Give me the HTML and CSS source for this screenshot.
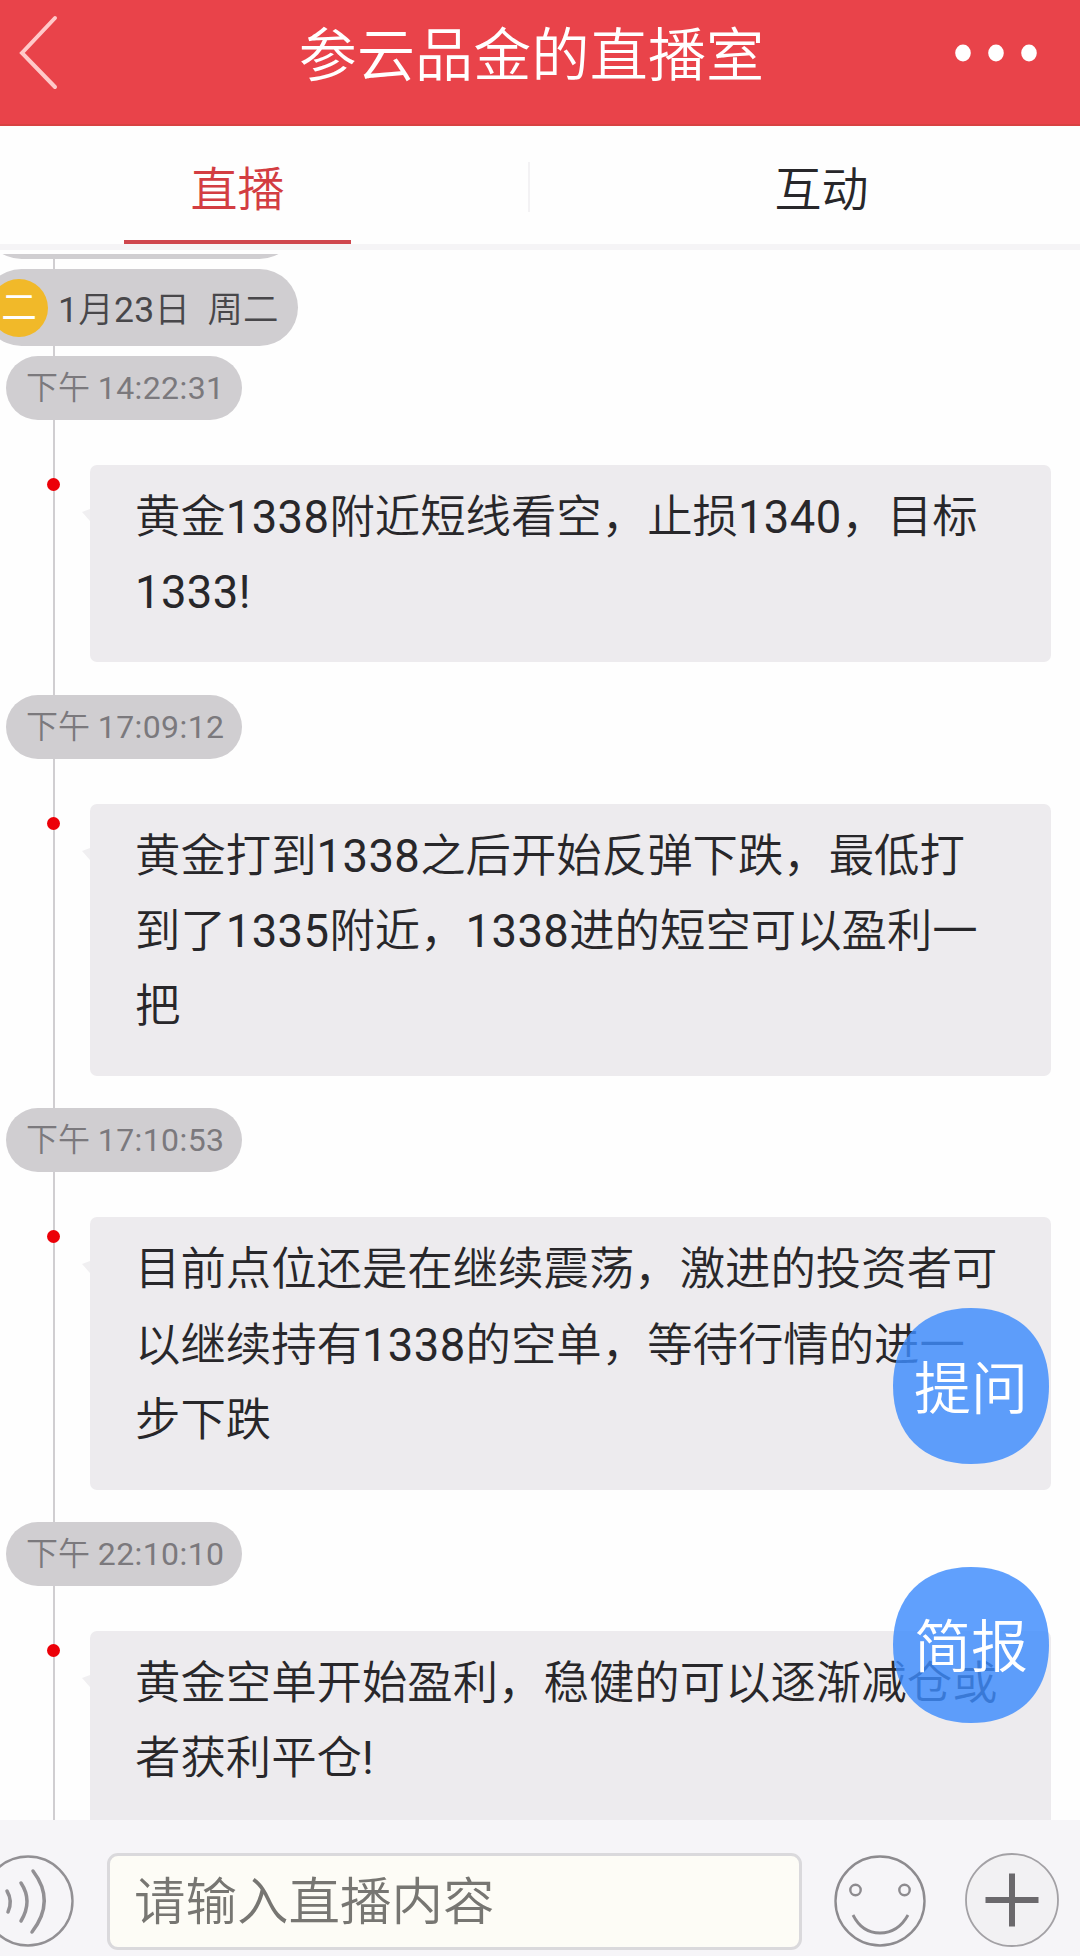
FILE: index.html
```html
<!DOCTYPE html>
<html lang="zh-CN">
<head>
    <meta charset="UTF-8">
    <meta name="viewport" content="width=device-width, initial-scale=1.0">
    <title>参云品金的直播室</title>
    <link rel="stylesheet" href="styles.css">
</head>
<body>
    <header class="header">
        <svg class="back" width="40" height="80" viewBox="0 0 40 80">
            <path d="M36 5 L3 40 L36 74" fill="none" stroke="#ffc9c9" stroke-width="4" stroke-linecap="round"/>
        </svg>
        <h1 class="title">参云品金的直播室</h1>
        <svg class="more" width="84" height="20" viewBox="0 0 84 20">
            <ellipse cx="9" cy="10" rx="7.8" ry="8.5" fill="#fff"/>
            <ellipse cx="42" cy="10" rx="7.8" ry="8.5" fill="#fff"/>
            <ellipse cx="75" cy="10" rx="7.8" ry="8.5" fill="#fff"/>
        </svg>
    </header>

    <nav class="tabs">
        <div class="tab active"><span>直播</span></div>
        <div class="tab-divider"></div>
        <div class="tab"><span>互动</span></div>
    </nav>

    <main class="feed">
        <div class="timeline">
            <div class="date previous"></div>
            <div class="date"><span class="day">二</span><span class="date-text"><span class="num">1</span>月<span class="num">23</span>日&nbsp; 周二</span></div>

            <div class="item">
                <div class="time">下午 <span class="num">14:22:31</span></div>
                <div class="message">黄金<span class="num">1338</span>附近短线看空，止损<span class="num">1340</span>，目标<span class="num">1333!</span></div>
            </div>
            <div class="item">
                <div class="time">下午 <span class="num">17:09:12</span></div>
                <div class="message">黄金打到<span class="num">1338</span>之后开始反弹下跌，最低打到了<span class="num">1335</span>附近，<span class="num">1338</span>进的短空可以盈利一把</div>
            </div>
            <div class="item">
                <div class="time">下午 <span class="num">17:10:53</span></div>
                <div class="message">目前点位还是在继续震荡，激进的投资者可以继续持有<span class="num">1338</span>的空单，等待行情的进一步下跌</div>
            </div>
            <div class="item">
                <div class="time">下午 <span class="num">22:10:10</span></div>
                <div class="message">黄金空单开始盈利，稳健的可以逐渐减仓或者获利平仓<span class="num">!</span></div>
            </div>
        </div>
    </main>

    <button class="float-btn ask">
        <svg class="float-bg" viewBox="0 0 156 156"><path d="M78 0C126 0 156 30 156 78S126 156 78 156S0 126 0 78S30 0 78 0Z"/></svg>
        <span>提问</span>
    </button>
    <button class="float-btn brief">
        <svg class="float-bg" viewBox="0 0 156 156"><path d="M78 0C126 0 156 30 156 78S126 156 78 156S0 126 0 78S30 0 78 0Z"/></svg>
        <span>简报</span>
    </button>

    <footer class="bottom-bar">
        <svg class="voice" width="92" height="94" viewBox="0 0 92 94" fill="none" stroke="#929094" stroke-width="3.5" stroke-linecap="round">
            <circle cx="46" cy="47" r="44.5" stroke-width="2.4"/>
            <path d="M25 37 Q31 47 26 58"/>
            <path d="M39 29 Q51 47 39 67"/>
            <path d="M51 17 Q74 47 50 78"/>
        </svg>
        <input class="input" type="text" placeholder="请输入直播内容">
        <svg class="smile" width="92" height="94" viewBox="0 0 92 94" fill="none" stroke="#8d8b8f" stroke-width="2.4">
            <circle cx="46" cy="47" r="44.5"/>
            <circle cx="21.5" cy="36" r="5.2"/>
            <circle cx="70.5" cy="36" r="5.2"/>
            <path d="M19 61 Q28 79 46 79 T74 61" stroke-width="2.8"/>
        </svg>
        <svg class="plus" width="94" height="96" viewBox="0 0 94 96" fill="none">
            <circle cx="47" cy="47" r="46" fill="#f2f1f3" stroke="#a3a1a5" stroke-width="1.8"/>
            <path d="M20.5 47H73.5M47 20.5V73.5" stroke="#6b696c" stroke-width="6"/>
        </svg>
    </footer>
</body>
</html>
```

FILE: styles.css
```css
* {
    box-sizing: border-box;
}
body {
    margin: 0;
    width: 1080px;
    height: 1956px;
    display: flex;
    flex-direction: column;
    position: relative;
    overflow: hidden;
    background: #fefefe;
    font-family: Roboto, "Noto Sans CJK SC", sans-serif;
    font-weight: 350;
    color: #28272a;
}
.header {
    height: 126px;
    flex: none;
    display: flex;
    align-items: center;
    justify-content: space-between;
    padding: 0 42px 18px 19px;
    background: #e9434a;
    border-bottom: 2px solid #d84242;
}
.title {
    margin: 5px 0 0 50px;
    font-size: 58px;
    font-weight: 350;
    letter-spacing: 0.2px;
    line-height: 80px;
    color: #fff;
}
.tabs {
    height: 124px;
    flex: none;
    display: flex;
    justify-content: space-between;
    border-bottom: 6px solid #f5f4f6;
}
.tab {
    width: 227px;
    height: 118px;
    margin: 0 144px 0 124px;
    font-size: 47px;
    line-height: 128px;
    text-align: center;
}
.tab:last-child {
    margin: 0 145px;
}
.tab.active {
    color: #d33d42;
    border-bottom: 4px solid #cf474e;
}
.tab-divider {
    width: 2px;
    height: 50px;
    margin-top: 36px;
    background: #f3f2f4;
}
.feed {
    flex: 1;
    min-height: 0;
    margin-top: 4px;
    overflow: hidden;
}
.timeline {
    position: relative;
}
/* vertical line behind the pills */
.timeline::before {
    content: "";
    position: absolute;
    left: 53px;
    top: 0;
    bottom: 0;
    width: 2px;
    background: #d0ced1;
}
.num {
    font-weight: 400;
    letter-spacing: 0.4px;
}
.date {
    position: relative;
    display: flex;
    align-items: center;
    width: 315px;
    height: 77px;
    margin: 0 0 10px -17px;
    padding-left: 7px;
    border-radius: 39px;
    background: #d0ced1;
    font-size: 35.5px;
    color: #48474a;
    white-space: pre;
}
.date.previous {
    margin-top: -72px;
}
.date-text {
    padding-bottom: 3px;
}
.day {
    width: 58px;
    height: 58px;
    margin-right: 10px;
    border-radius: 50%;
    background: #f1b929;
    color: #fff;
    font-weight: 400;
    line-height: 59px;
    text-align: center;
}
.item {
    display: flex;
    flex-direction: column;
    padding-bottom: 32.6px;
}
.time {
    position: relative;
    width: 236px;
    height: 64px;
    margin: 0 0 45px 6px;
    padding-left: 20px;
    border-radius: 32px;
    background: #d0ced1;
    color: #7b797d;
    font-size: 32px;
    line-height: 65px;
    white-space: nowrap;
}
.message {
    position: relative;
    width: 961px;
    margin-left: 90px;
    padding: 15px 42px 31.6px 45px;
    border-radius: 7px;
    background: #edebee;
    font-size: 45.4px;
    line-height: 75.2px;
}
.message::before {
    content: "";
    position: absolute;
    left: -43px;
    top: 13px;
    width: 13px;
    height: 13px;
    border-radius: 50%;
    background: #ec0008;
}
.message::after {
    content: "";
    position: absolute;
    left: -8px;
    top: 44px;
    border-top: 3px solid transparent;
    border-right: 8px solid #f0eff1;
    border-bottom: 9px solid transparent;
}
.float-btn {
    position: absolute;
    left: 893px;
    width: 156px;
    height: 156px;
    padding: 0 0 4px;
    border: none;
    background: none;
    color: #fff;
    font-family: inherit;
    font-size: 57px;
    font-weight: 350;
    cursor: pointer;
}
.float-btn span {
    position: relative;
}
.float-bg {
    position: absolute;
    left: 0;
    top: 0;
    width: 156px;
    height: 156px;
    fill: rgba(61, 139, 252, 0.82);
}
.ask {
    top: 1308px;
}
.brief {
    top: 1567px;
    padding-bottom: 6px;
}
.bottom-bar {
    height: 136px;
    flex: none;
    display: flex;
    align-items: center;
    padding: 26px 21px 0 0;
    background: #f6f5f8;
}
.bottom-bar svg {
    flex: none;
}
.voice {
    margin-left: -18px;
}
.input {
    width: 695px;
    height: 97px;
    margin: 0 32px 0 33px;
    padding: 2px 25px 0 24px;
    border: 3px solid #dad9dc;
    border-radius: 11px;
    background: #fdfcf6;
    font-family: inherit;
    font-size: 51.5px;
    font-weight: 350;
}
.input::placeholder {
    color: #777672;
}
.plus {
    margin-left: 39px;
}
```
